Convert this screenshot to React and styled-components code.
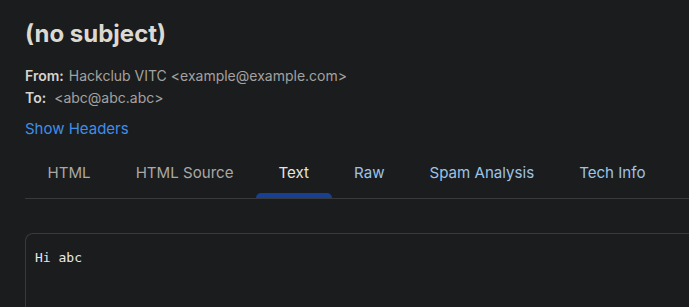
import React, { useState } from 'react';
import styled, { createGlobalStyle } from 'styled-components';

const GlobalStyle = createGlobalStyle`
  html, body {
    margin: 0;
    padding: 0;
    background: #1b1c1e;
  }
  body {
    font-family: Inter, "Noto Sans", sans-serif;
    color: #d8d6d0;
  }
`;

const Page = styled.div`
  height: 100vh;
  padding: 16px 0 0 25px;
  box-sizing: border-box;
  overflow: hidden;
`;

const Subject = styled.h1`
  margin: 0;
  font-size: 24px;
  font-weight: 700;
  line-height: 36px;
  color: #dcd9d2;
`;

const Meta = styled.div`
  margin-top: 13px;
  display: flex;
  flex-direction: column;
`;

const MetaRow = styled.div`
  display: flex;
  gap: ${(p) => p.$gap}px;
  font-size: 14px;
  line-height: 22px;
`;

const MetaLabel = styled.span`
  font-weight: 600;
  color: #d6d4ce;
`;

const MetaValue = styled.span`
  color: #a3a2a0;
`;

const HeadersLink = styled.a`
  display: inline-block;
  margin-top: 9px;
  font-size: 15px;
  line-height: 22px;
  color: #3f8fe8;
  cursor: pointer;
`;

const TabBar = styled.div`
  margin-top: 5px;
  display: flex;
  border-bottom: 1px solid #38393b;
`;

const Tab = styled.button`
  position: relative;
  height: 53px;
  padding: 1px 22.5px 0;
  background: none;
  border: none;
  font-family: inherit;
  font-size: 15.1px;
  color: ${(p) => (p.$active ? '#e6e4de' : p.$muted ? '#a9a8a5' : '#9cc3e6')};
  cursor: pointer;

  &::after {
    content: '';
    display: ${(p) => (p.$active ? 'block' : 'none')};
    position: absolute;
    left: 0;
    right: 0;
    bottom: 0;
    height: 5px;
    border-radius: 5px 5px 0 0;
    background: #173f93;
  }
`;

const Body = styled.div`
  margin-top: 34px;
  border: 1px solid #38393b;
  border-right: none;
  border-bottom: none;
  border-radius: 8px 0 0 0;
  padding: 15px 9px;
  height: 120px;
`;

const Plain = styled.pre`
  margin: 0;
  font-family: "DejaVu Sans Mono", monospace;
  font-size: 13px;
  line-height: 18px;
  color: #e8e8e8;
`;

const tabs = [
  { name: 'HTML', muted: true },
  { name: 'HTML Source', muted: true },
  { name: 'Text' },
  { name: 'Raw' },
  { name: 'Spam Analysis' },
  { name: 'Tech Info' },
];

export default function App() {
  const [active, setActive] = useState('Text');

  return (
    <>
      <GlobalStyle />
      <Page>
        <Subject>(no subject)</Subject>
        <Meta>
          <MetaRow $gap={5}>
            <MetaLabel>From:</MetaLabel>
            <MetaValue>Hackclub VITC &lt;example@example.com&gt;</MetaValue>
          </MetaRow>
          <MetaRow $gap={8}>
            <MetaLabel>To:</MetaLabel>
            <MetaValue>&lt;abc@abc.abc&gt;</MetaValue>
          </MetaRow>
        </Meta>
        <HeadersLink>Show Headers</HeadersLink>
        <TabBar>
          {tabs.map((t) => (
            <Tab
              key={t.name}
              $active={active === t.name}
              $muted={t.muted}
              onClick={() => setActive(t.name)}
            >
              {t.name}
            </Tab>
          ))}
        </TabBar>
        <Body>
          <Plain>Hi abc</Plain>
        </Body>
      </Page>
    </>
  );
}
